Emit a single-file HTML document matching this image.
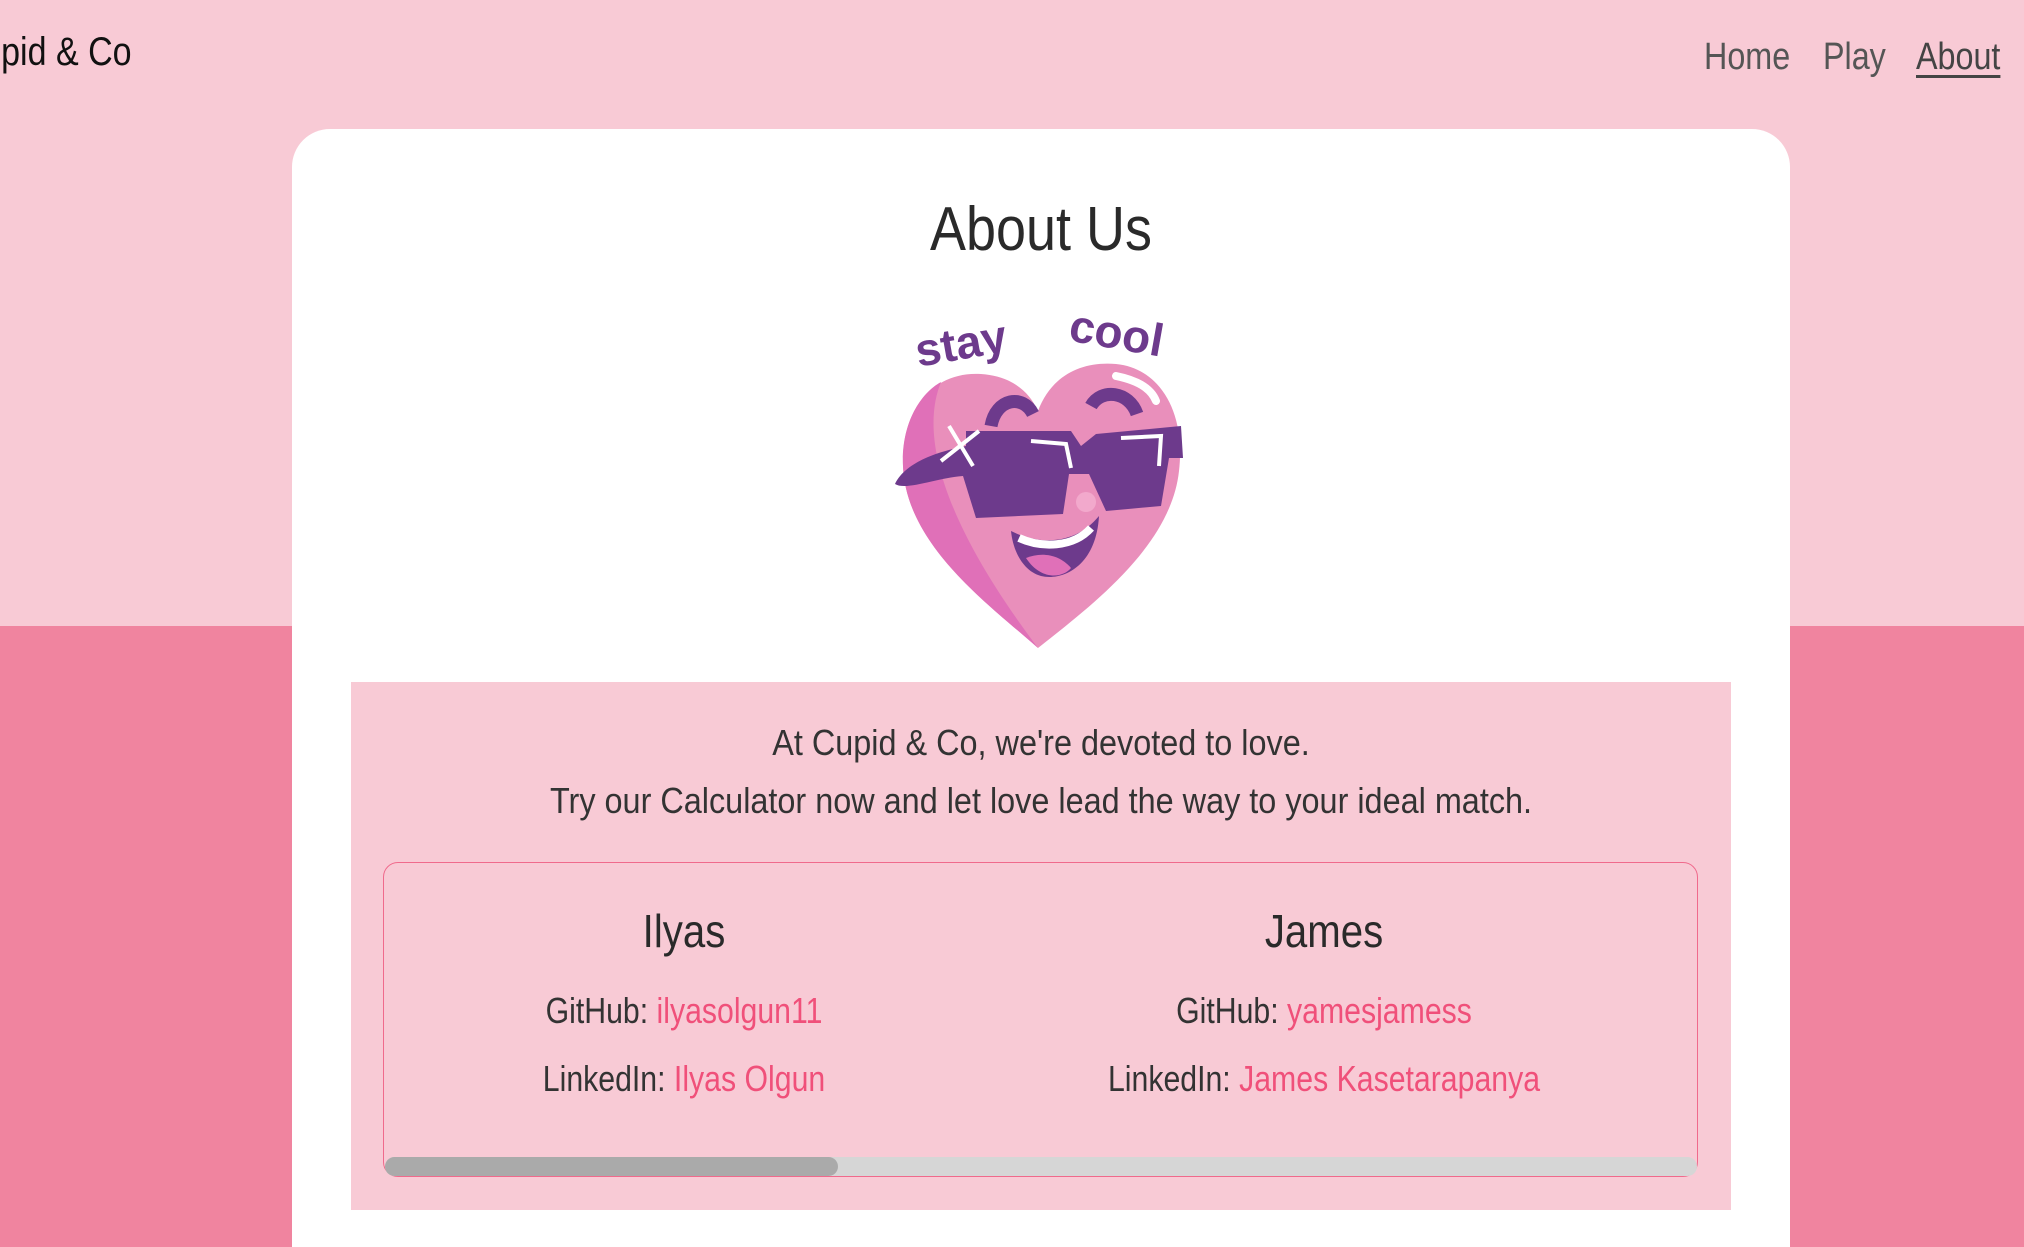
<!DOCTYPE html>
<html><head><meta charset="utf-8"><style>
*{margin:0;padding:0;box-sizing:border-box}
html,body{width:2024px;height:1247px;overflow:hidden}
body{position:relative;background:#f0849f;font-family:"Liberation Sans",sans-serif;color:#333}
.top{position:absolute;left:0;top:0;width:2024px;height:626px;background:#f8cad5}
.brand{position:absolute;right:1892px;top:30px;font-size:40px;color:#111;white-space:nowrap;transform:scaleX(0.85);transform-origin:right center}
.nav{position:absolute;top:36px;font-size:38px;color:#555;transform:scaleX(0.85);transform-origin:left center}
.card{position:absolute;left:292px;top:129px;width:1498px;height:1118px;background:#fff;border-radius:38px 38px 0 0}
h1{position:absolute;left:292px;width:1498px;top:194px;text-align:center;font-size:62px;font-weight:normal;color:#2a2a2a;transform:scaleX(0.87)}
.inner{position:absolute;left:351px;top:682px;width:1380px;height:528px;background:#f8cad5}
.t{position:absolute;left:292px;width:1498px;text-align:center;font-size:36px;color:#333;transform:scaleX(0.9)}
.box{position:absolute;left:383px;top:862px;width:1315px;height:315px;border:1.5px solid #f06a8c;border-radius:15px}
.c{position:absolute;text-align:center;width:600px;font-size:36px;transform:scaleX(0.84)}
.c h2{font-weight:normal;font-size:46px;color:#2a2a2a;margin-bottom:32px;transform:scaleX(1.04)}
.c p{height:68px}
a{color:#f0507a;text-decoration:none}
.track{position:absolute;left:385px;top:1157px;width:1312px;height:19px;background:#d6d6d6;border-radius:10px}
.thumb{position:absolute;left:385px;top:1157px;width:453px;height:19px;background:#aaa;border-radius:10px}
</style></head><body>
<div class="top"></div>
<div class="brand">Cupid &amp; Co</div>
<div class="nav" style="left:1704px">Home</div>
<div class="nav" style="left:1823px">Play</div>
<div class="nav" style="left:1916px;color:#444;text-decoration:underline;text-underline-offset:6px">About</div>
<div class="card"></div>
<h1>About Us</h1>
<svg style="position:absolute;left:891px;top:306px" width="294" height="344" viewBox="0 0 294 344">
<text x="25" y="55" font-family="Liberation Sans" font-weight="bold" font-size="46" fill="#6d3a8c" transform="rotate(-10 60 45)">stay</text>
<text x="176" y="42" font-family="Liberation Sans" font-weight="bold" font-size="46" fill="#6d3a8c" transform="rotate(10 220 40)">cool</text>
<path d="M147 342 C100 300 15 240 12 160 C10 100 45 65 90 68 C120 70 138 85 147 105 C160 70 190 55 225 58 C268 62 295 105 288 165 C280 240 200 300 147 342Z" fill="#e98fbb"/>
<path d="M147 342 C100 300 15 240 12 160 C10 120 28 88 50 76 C32 120 40 200 147 342Z" fill="#e070b8"/>
<path d="M100 120 C105 92 132 88 142 108" stroke="#6d3a8c" stroke-width="13" fill="none"/>
<path d="M200 100 C210 82 238 85 246 108" stroke="#6d3a8c" stroke-width="13" fill="none"/>
<path d="M4 178 C15 155 50 145 75 140 L75 125 L180 125 L190 140 L205 128 L290 120 L292 152 L278 152 L270 200 L215 205 L198 168 L178 168 L172 208 L85 212 L72 170 C45 172 15 185 4 178Z" fill="#6d3a8c"/>
<path d="M140 135 L175 138 L180 162 M230 132 L270 130 L268 160" stroke="#fff" stroke-width="4" fill="none"/>
<path d="M58 120 L82 160 M50 155 L88 125" stroke="#fff" stroke-width="4"/>
<path d="M120 225 C150 240 185 238 208 210 C205 262 170 275 150 270 C132 265 122 245 120 225Z" fill="#6d3a8c"/>
<path d="M128 232 C150 242 182 242 200 222" stroke="#fff" stroke-width="8" fill="none"/>
<path d="M135 252 C150 275 172 272 180 262 C168 248 150 246 135 252Z" fill="#e070b8"/>
<circle cx="195" cy="196" r="10" fill="#f2a9cc"/>
<path d="M225 70 C245 74 260 82 265 95" stroke="#fff" stroke-width="8" fill="none" stroke-linecap="round"/>
</svg>
<div class="inner"></div>
<div class="t" style="top:722px">At Cupid &amp; Co, we're devoted to love.</div>
<div class="t" style="top:780px">Try our Calculator now and let love lead the way to your ideal match.</div>
<div class="box"></div>
<div class="c" style="left:384px;top:904px"><h2>Ilyas</h2><p>GitHub: <a>ilyasolgun11</a></p><p>LinkedIn: <a>Ilyas Olgun</a></p></div>
<div class="c" style="left:1024px;top:904px"><h2>James</h2><p>GitHub: <a>yamesjamess</a></p><p>LinkedIn: <a>James Kasetarapanya</a></p></div>
<div class="track"></div><div class="thumb"></div>
</body></html>
